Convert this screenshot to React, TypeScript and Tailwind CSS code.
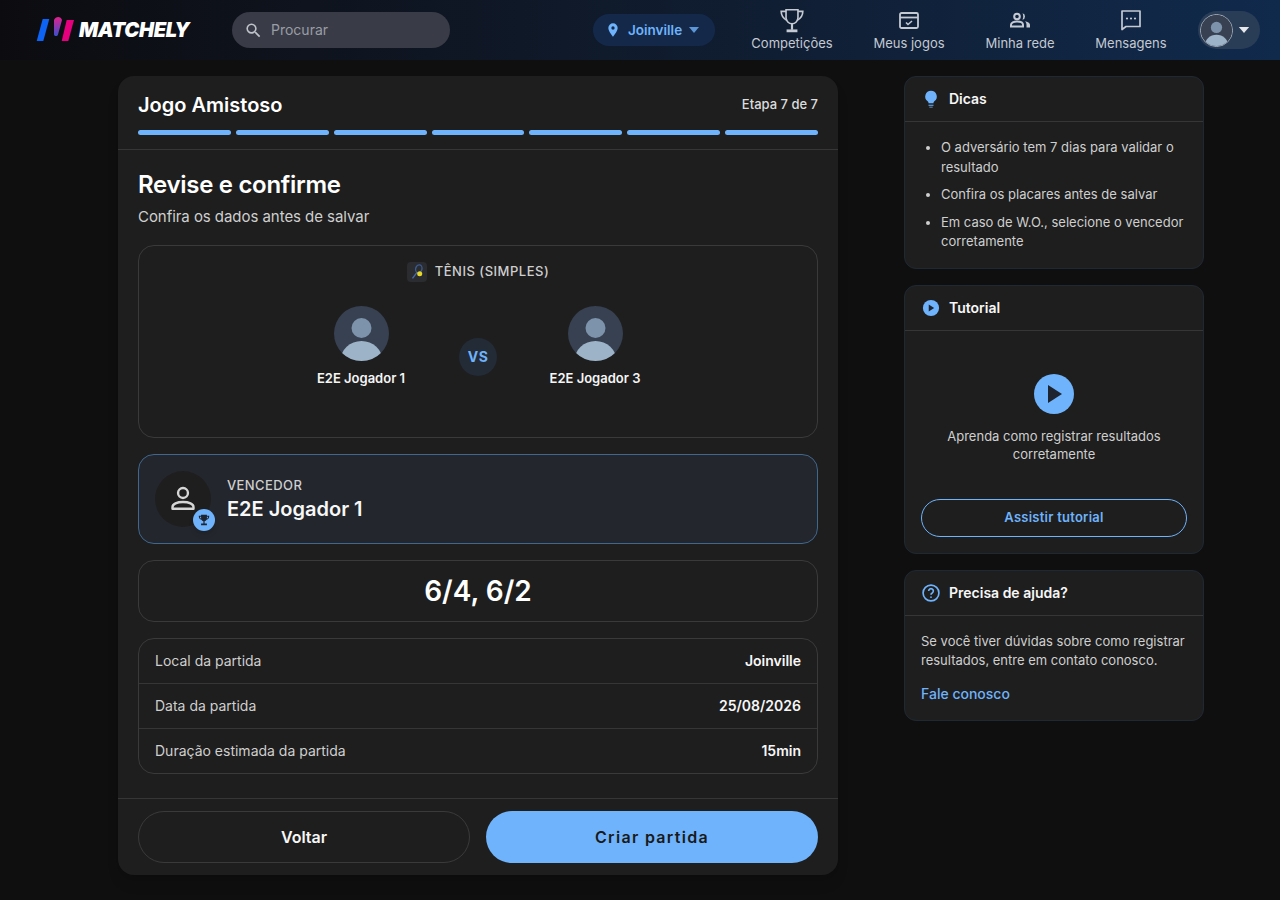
const navItems = [
  {
    label: "Competições",
    icon: (
      <svg viewBox="0 0 24 24" className="h-[26px] w-[26px]" fill="none" stroke="#c4c9d2" strokeWidth="1.500">
        <path d="M6.500 2.500h11v7.500a5.500 5.500 0 0 1-11 0z" />
        <path d="M6.500 4H2c0 4 1.500 6.500 5.500 8.500M17.500 4H22c0 4-1.500 6.500-5.500 8.500" />
        <path d="M12 15.500V21" strokeWidth="2" />
        <path d="M7 22h10" strokeWidth="2.600" />
      </svg>
    ),
  },
  {
    label: "Meus jogos",
    icon: (
      <svg viewBox="0 0 24 24" className="h-[24px] w-[24px]" fill="none" stroke="#c4c9d2" strokeWidth="1.800">
        <rect x="3" y="5" width="18" height="15" rx="1.500" />
        <path d="M3 9.500h18" />
        <path d="m9 14.500 2 2 4-3.500" strokeWidth="1.600" />
      </svg>
    ),
  },
  {
    label: "Minha rede",
    icon: (
      <svg viewBox="0 0 24 24" className="h-[24px] w-[24px]">
        <circle cx="9" cy="8.500" r="2.800" fill="none" stroke="#c4c9d2" strokeWidth="2" />
        <path d="M3 18.500v-1.700c0-2 2.700-3.300 6-3.300s6 1.300 6 3.300v1.700z" fill="none" stroke="#c4c9d2" strokeWidth="2" />
        <path d="M14.500 5.300a3.300 3.300 0 0 1 0 6.400c1-1.900 1-4.500 0-6.400zM17 13.300c2.500.5 5 1.500 5 3.500v2.700h-3.500v-2.700c0-1.400-.6-2.600-1.500-3.500z" fill="#c4c9d2" />
      </svg>
    ),
  },
  {
    label: "Mensagens",
    icon: (
      <svg viewBox="0 0 24 24" className="h-[24px] w-[24px]" fill="none" stroke="#c4c9d2" strokeWidth="1.700">
        <path d="M3 3h18v15.500H7L3 21.500z" strokeLinejoin="round" />
        <path d="M8 10.500h.01M12 10.500h.01M16 10.500h.01" strokeWidth="2.200" strokeLinecap="round" />
      </svg>
    ),
  },
];

const navWidths = ["w-[82px]", "w-[72px]", "w-[70px]", "w-[72px]"];

const details = [
  ["Local da partida", "Joinville"],
  ["Data da partida", "25/08/2026"],
  ["Duração estimada da partida", "15min"],
];

function Caret({ className }: { className: string }) {
  return (
    <svg viewBox="0 0 12 7" className={className}>
      <path d="M0 0h12L6 7z" fill="currentColor" />
    </svg>
  );
}

function DefaultAvatar({ className }: { className: string }) {
  return (
    <svg viewBox="0 0 55 55" className={className}>
      <defs>
        <clipPath id="avatar-clip">
          <circle cx="27.500" cy="27.500" r="27.500" />
        </clipPath>
      </defs>
      <g clipPath="url(#avatar-clip)">
        <rect width="55" height="55" fill="#374151" />
        <circle cx="27.500" cy="22" r="10" fill="#7c93ab" />
        <ellipse cx="27.500" cy="55" rx="21" ry="20" fill="#9db3c8" />
      </g>
    </svg>
  );
}

function Player({ name }: { name: string }) {
  return (
    <div className="flex w-[140px] flex-col items-center">
      <DefaultAvatar className="h-[55px] w-[55px]" />
      <span className="mt-[7px] text-[13px] leading-[20px] font-semibold text-[#f5f5f5]">{name}</span>
    </div>
  );
}

function SideCard({ icon, title, children }: { icon: React.ReactNode; title: string; children: React.ReactNode }) {
  return (
    <section className="w-[300px] rounded-xl border border-[#1f2933] bg-[#1e1e1e]">
      <header className="flex h-[45px] items-center gap-[8px] border-b border-[#363636] px-4">
        {icon}
        <h3 className="text-sm font-semibold text-[#f7f7f7]">{title}</h3>
      </header>
      {children}
    </section>
  );
}

export default function App() {
  return (
    <div className="min-h-[900px] bg-[#0f0f0f] font-['Inter',sans-serif] text-white">
      {/* Top bar */}
      <header className="flex h-[60px] items-center bg-gradient-to-r from-[#0c0c10] to-[#102a4c] pr-5 pl-9">
        <div className="flex w-[196px] items-center gap-[4px]">
          <svg viewBox="0 0 39 26" className="h-[26px] w-[39px] shrink-0 -translate-y-[1px]">
            <defs>
              <linearGradient id="logo-mid" x1="0" y1="0" x2="0" y2="1">
                <stop offset="0" stopColor="#e0218a" />
                <stop offset="1" stopColor="#3a4fd0" />
              </linearGradient>
            </defs>
            <path d="M6.700 3h6.600L7.300 25H.7z" fill="#0d63f3" />
            <path d="M18 4c1.500-4 7-4 8 0L22 18.500c-.5 2-3.500 2-4 0z" fill="url(#logo-mid)" />
            <path d="M30.700 4H38l-5.700 21h-6.600z" fill="#e6007e" />
          </svg>
          <span className="text-[20px] leading-none font-black tracking-[-0.3px] text-white italic">MATCHELY</span>
        </div>

        <div className="flex h-[36px] w-[218px] items-center gap-[8px] rounded-full bg-[#393c47] pl-[12px]">
          <svg viewBox="0 0 24 24" className="h-[19px] w-[19px]">
            <path
              fill="#c0c3ca"
              d="M15.500 14h-.79l-.28-.27A6.470 6.470 0 0 0 16 9.500 6.500 6.500 0 1 0 9.500 16c1.610 0 3.090-.59 4.230-1.570l.27.28v.79l5 4.990L20.490 19l-4.990-5zm-6 0C7.010 14 5 11.990 5 9.500S7.010 5 9.500 5 14 7.010 14 9.500 11.990 14 9.500 14z"
            />
          </svg>
          <span className="text-sm text-[#9a9da5]">Procurar</span>
        </div>

        <div className="ml-[143px] flex h-[32px] w-[122px] items-center rounded-full bg-[#14294a] pl-[13px]">
          <svg viewBox="0 0 24 24" className="-ml-[1px] h-[16px] w-[16px] shrink-0">
            <path
              fill="#6eb3fb"
              fillRule="evenodd"
              d="M12 2a7 7 0 0 0-7 7c0 5 7 13 7 13s7-8 7-13a7 7 0 0 0-7-7zm0 9.500a2.500 2.500 0 1 1 0-5 2.500 2.500 0 0 1 0 5z"
            />
          </svg>
          <span className="ml-[7px] text-[13.500px] font-semibold text-[#6eb3fb]">Joinville</span>
          <Caret className="ml-[7px] h-[6px] w-[10px] text-[#5d96d6]" />
        </div>

        <nav className="ml-[36px] flex items-center gap-[40px] pb-[3px]">
          {navItems.map((item, i) => (
            <div key={item.label} className={`flex flex-col items-center ${navWidths[i]}`}>
              <div className="flex h-[28px] items-center justify-center">{item.icon}</div>
              <span className="mt-[1px] text-[13px] leading-[16px] whitespace-nowrap text-[#c4c9d2]">{item.label}</span>
            </div>
          ))}
        </nav>

        <div className="ml-[31px] flex h-[38px] w-[62px] items-center gap-[5px] rounded-full bg-[#2a3d57] pl-[2px]">
          <div className="rounded-full border border-[#aab3bf]">
            <DefaultAvatar className="h-[31px] w-[31px]" />
          </div>
          <Caret className="h-[6px] w-[12px] text-[#e6e8ec]" />
        </div>
      </header>

      <main className="flex items-start gap-[66px] pt-4 pl-[118px]">
        {/* Wizard card */}
        <section className="w-[720px] rounded-2xl bg-[#1e1e1e] shadow-lg">
          <div className="border-b border-[#363636] px-5 pt-[16px] pb-[14px]">
            <div className="flex items-center justify-between">
              <h1 className="text-xl leading-[26px] font-semibold text-white">Jogo Amistoso</h1>
              <span className="text-[13px] font-medium text-[#dcdcdc]">Etapa 7 de 7</span>
            </div>
            <div className="mt-[12px] flex gap-[5px]">
              {[1, 2, 3, 4, 5, 6, 7].map((n) => (
                <div key={n} className="h-[5px] flex-1 rounded-full bg-[#6eb3fb]" />
              ))}
            </div>
          </div>

          <div className="px-5 pt-[19px] pb-6">
            <h2 className="text-2xl leading-[32px] font-semibold tracking-[-0.3px] text-white">Revise e confirme</h2>
            <p className="mt-[6px] text-[15px] leading-[20px] tracking-[-0.05px] text-[#cfcfcf]">Confira os dados antes de salvar</p>

            <div className="mt-[18px] h-[193px] rounded-2xl border border-[#3a3a3a] pt-[16px]">
              <div className="flex h-[20px] items-center justify-center gap-2">
                <div className="flex h-[20px] w-[20px] items-center justify-center rounded bg-[#2a2c30]">
                  <svg viewBox="0 0 20 20" className="h-[18px] w-[18px]">
                    <ellipse cx="12" cy="6.500" rx="3.500" ry="4.500" fill="none" stroke="#3e5a92" strokeWidth="1.500" transform="rotate(15 12 6.500)" />
                    <path d="M10 10.500 5 17" stroke="#4a6aa8" strokeWidth="1.500" />
                    <circle cx="13" cy="12" r="2.800" fill="#e8d82a" />
                  </svg>
                </div>
                <span className="text-[13px] font-medium tracking-[0.5px] text-[#cfcfcf]">TÊNIS (SIMPLES)</span>
              </div>
              <div className="mt-[24px] flex justify-center">
                <Player name="E2E Jogador 1" />
                <div className="mx-[28px] mt-[32px] flex h-[38px] w-[38px] items-center justify-center rounded-full bg-[#232b37] text-sm font-bold tracking-[0.5px] text-[#6eb3fb]">
                  VS
                </div>
                <Player name="E2E Jogador 3" />
              </div>
            </div>

            <div className="mt-4 flex h-[90px] items-center gap-4 rounded-2xl border border-[#40678f] bg-[#23262c] pl-4">
              <div className="relative flex h-[56px] w-[56px] items-center justify-center rounded-full bg-[#1e1e1e]">
                <svg viewBox="0 0 24 24" className="h-[36px] w-[36px]" fill="none" stroke="#d6d6d6" strokeWidth="1.600">
                  <circle cx="12" cy="8" r="3.300" />
                  <path d="M5 18.500v-1.200c0-2 3-3.300 7-3.300s7 1.300 7 3.300v1.200z" strokeLinejoin="round" />
                </svg>
                <div className="absolute -right-[4px] -bottom-[4px] flex h-[22px] w-[22px] items-center justify-center rounded-full bg-[#6eb3fb] shadow-md">
                  <svg viewBox="0 0 24 24" className="h-[14px] w-[14px]" fill="#1e2430">
                    <path d="M7 3h10v1.500h4c0 4-1.500 6.200-4.600 7A5 5 0 0 1 13 14.300V18h4v3H7v-3h4v-3.700a5 5 0 0 1-3.400-2.800C4.500 10.700 3 8.500 3 4.500h4zM5 6.500c.2 1.500.8 2.600 2 3.200V6.500zm14 0h-2v3.200c1.200-.6 1.800-1.700 2-3.200z" fillRule="evenodd" />
                  </svg>
                </div>
              </div>
              <div>
                <div className="text-[13px] leading-[16px] font-medium tracking-[0.4px] text-[#cfcfcf]">VENCEDOR</div>
                <div className="mt-[3px] text-xl leading-[26px] font-semibold text-[#f7f7f7]">E2E Jogador 1</div>
              </div>
            </div>

            <div className="mt-4 flex h-[62px] items-center justify-center rounded-2xl border border-[#3a3a3a] text-[28px] font-semibold text-white">
              6/4, 6/2
            </div>

            <div className="mt-4 rounded-2xl border border-[#3a3a3a]">
              {details.map(([label, value], i) => (
                <div
                  key={label}
                  className={`flex items-center justify-between px-4 ${i > 0 ? "h-[45px] border-t border-[#363636]" : "h-[44px]"}`}
                >
                  <span className="text-sm text-[#cfcfcf]">{label}</span>
                  <span className="text-sm font-semibold text-[#f7f7f7]">{value}</span>
                </div>
              ))}
            </div>
          </div>

          <div className="flex gap-4 border-t border-[#363636] px-5 pt-3 pb-3">
            <button className="h-[52px] w-[332px] rounded-full border border-[#3a3a3a] text-base font-semibold text-[#f7f7f7]">
              Voltar
            </button>
            <button className="h-[52px] w-[332px] rounded-full bg-[#6eb3fb] text-base font-semibold tracking-[1.300px] text-[#1a1a1a]">
              Criar partida
            </button>
          </div>
        </section>

        {/* Sidebar */}
        <aside className="flex flex-col gap-4">
          <SideCard
            title="Dicas"
            icon={
              <svg viewBox="0 0 24 24" className="h-[20px] w-[20px]" fill="#6eb3fb">
                <path d="M12 2a7 7 0 0 0-4 12.700c.6.5 1 1.100 1 1.800v.5h6v-.5c0-.7.4-1.300 1-1.800A7 7 0 0 0 12 2zM9 19h6v1.200H9zM10 21.300h4v.9h-4z" />
              </svg>
            }
          >
            <ul className="list-disc py-4 pr-4 pl-9 text-[13px] leading-[19.500px] text-[#cfcfcf]">
              <li className="pb-[8px]">O adversário tem 7 dias para validar o resultado</li>
              <li className="pb-[8px]">Confira os placares antes de salvar</li>
              <li>Em caso de W.O., selecione o vencedor corretamente</li>
            </ul>
          </SideCard>

          <SideCard
            title="Tutorial"
            icon={
              <div className="flex h-[20px] w-[20px] items-center justify-center">
                <svg viewBox="0 0 20 20" className="h-[18px] w-[18px]">
                  <circle cx="10" cy="10" r="9" fill="#6eb3fb" />
                  <path d="M7.500 6v8l6-4z" fill="#1e2430" />
                </svg>
              </div>
            }
          >
            <div className="flex h-[168px] flex-col items-center justify-center px-4 pt-[8px]">
              <div className="flex h-[40px] w-[40px] items-center justify-center rounded-full bg-[#6eb3fb]">
                <svg viewBox="0 0 20 20" className="ml-[2px] h-[20px] w-[20px]">
                  <path d="M3 1v18l14-9z" fill="#1e2430" />
                </svg>
              </div>
              <p className="mt-[12.500px] w-[230px] text-center text-[13px] leading-[18px] text-[#cfcfcf]">
                Aprenda como registrar resultados corretamente
              </p>
            </div>
            <div className="px-4 pb-4">
              <button className="h-[38px] w-full rounded-full border border-[#6eb3fb] text-[13px] font-semibold tracking-[0.25px] text-[#6eb3fb]">
                Assistir tutorial
              </button>
            </div>
          </SideCard>

          <SideCard
            title="Precisa de ajuda?"
            icon={
              <svg viewBox="0 0 24 24" className="h-[20px] w-[20px]" fill="none" stroke="#6eb3fb" strokeWidth="2">
                <circle cx="12" cy="12" r="9.500" />
                <path d="M9.200 9.500a2.800 2.800 0 1 1 4.300 2.400c-1 .6-1.500 1.100-1.500 2.100" />
                <path d="M12 17h.01" strokeLinecap="round" />
              </svg>
            }
          >
            <div className="px-4 py-4">
              <p className="text-[13px] leading-[19.500px] text-[#cfcfcf]">
                Se você tiver dúvidas sobre como registrar resultados, entre em contato conosco.
              </p>
              <a className="mt-[13px] block text-sm leading-[20px] font-medium text-[#6eb3fb]">Fale conosco</a>
            </div>
          </SideCard>
        </aside>
      </main>
    </div>
  );
}
